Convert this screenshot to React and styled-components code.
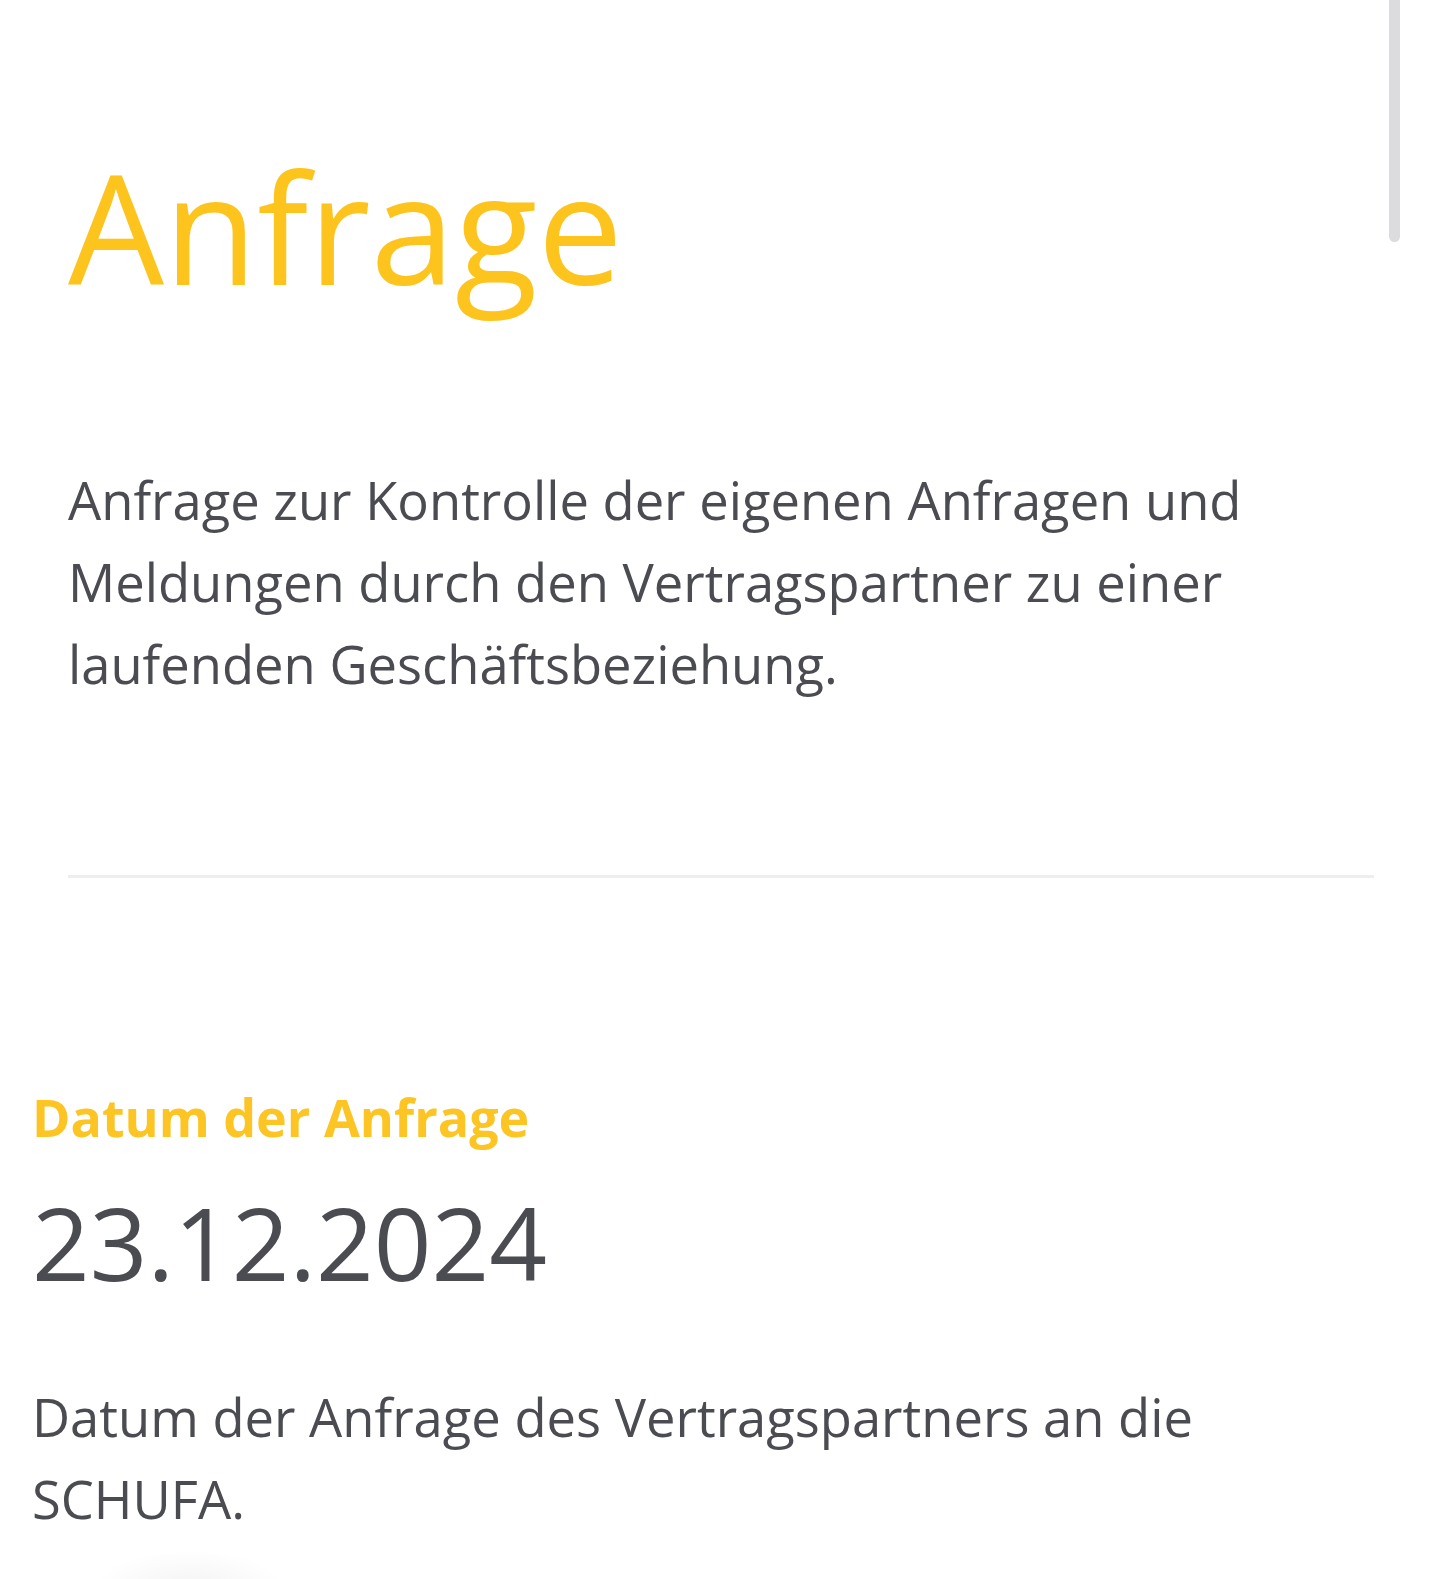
import React from "react";
import styled, { createGlobalStyle } from "styled-components";

const GlobalStyle = createGlobalStyle`
	html, body {
		margin: 0;
		padding: 0;
		background: #ffffff;
	}
	body {
		font-family: "Open Sans", "Noto Sans", sans-serif;
		color: #4a4c51;
		overflow: hidden;
	}
`;

// Inhalt der Detailseite
const info = {
	title: "Anfrage",
	text: "Anfrage zur Kontrolle der eigenen Anfragen und Meldungen durch den Vertragspartner zu einer laufenden Geschäftsbeziehung.",
	fields: [
		{
			label: "Datum der Anfrage",
			value: "23.12.2024",
			hint: "Datum der Anfrage des Vertragspartners an die SCHUFA.",
		},
	],
};

const App = () => {
	return (
		<Page>
			<GlobalStyle />
			<Header>
				<Title>{info.title}</Title>
				<Intro>{info.text}</Intro>
				<Divider />
			</Header>

			{info.fields.map((f, idx) => (
				<Field key={idx}>
					<Label>{f.label}</Label>
					<Value>{f.value}</Value>
					<Hint>{f.hint}</Hint>
				</Field>
			))}

			<ScrollThumb />
			<FabShadow />
		</Page>
	);
};

const Page = styled.div`
	position: relative;
	width: 1440px;
	height: 1579px;
	overflow: hidden;
	background: #ffffff;
`;

const Header = styled.header`
	padding: 136px 66px 0 68px;
`;

const Title = styled.h1`
	margin: 0;
	font-size: 152px;
	line-height: 182px;
	font-weight: 400;
	color: #fdc41e;
`;

const Intro = styled.p`
	margin: 141px 0 0;
	font-size: 52.5px;
	line-height: 82px;
	color: #4a4c51;
	max-width: 1220px;
`;

const Divider = styled.hr`
	margin: 170px 0 0;
	border: none;
	height: 3px;
	background: #eceef1;
`;

const Field = styled.section`
	padding: 206px 32px 0 32px;
`;

const Label = styled.h2`
	margin: 0;
	font-size: 52px;
	line-height: 66px;
	font-weight: 700;
	color: #fcc524;
`;

const Value = styled.div`
	margin-top: 31px;
	font-size: 101px;
	line-height: 122px;
	color: #4a4c51;
`;

const Hint = styled.p`
	margin: 73px 0 0;
	font-size: 52.5px;
	line-height: 82px;
	color: #4a4c51;
	max-width: 1220px;
`;

const ScrollThumb = styled.div`
	position: absolute;
	top: -10px;
	right: 40px;
	width: 11px;
	height: 252px;
	border-radius: 6px;
	background: #dcdcde;
`;

const FabShadow = styled.div`
	position: absolute;
	left: 90px;
	bottom: -60px;
	width: 200px;
	height: 90px;
	border-radius: 50%;
	background: radial-gradient(ellipse at center, rgba(0, 0, 0, 0.05), rgba(0, 0, 0, 0) 70%);
`;

export default App;
